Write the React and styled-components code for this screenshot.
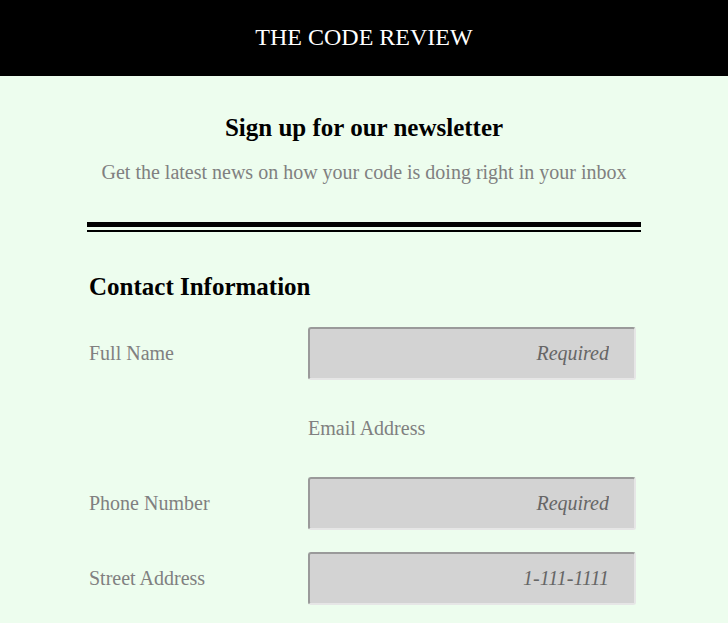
import React from 'react';
import styled, { createGlobalStyle } from 'styled-components';

const GlobalStyle = createGlobalStyle`
  html, body {
    margin: 0;
    padding: 0;
    background: #edfdee;
    font-family: "Liberation Serif", "Times New Roman", serif;
  }
`;

const Header = styled.header`
  display: flex;
  align-items: center;
  justify-content: center;
  height: 76px;
  padding-bottom: 1px;
  box-sizing: border-box;
  background: #000;
  color: #fff;
  font-size: 24px;
`;

const Main = styled.main`
  width: 554px;
  margin: 0 auto;
  display: flex;
  flex-direction: column;
`;

const Intro = styled.section`
  display: flex;
  flex-direction: column;
  align-items: center;
  padding-top: 38px;
`;

const Title = styled.h2`
  margin: 0;
  font-size: 25px;
  font-weight: bold;
  color: #000;
`;

const Subtitle = styled.p`
  margin: 19px 0 0;
  font-size: 20px;
  color: #808080;
`;

const DoubleRule = styled.div`
  margin-top: 38px;
  height: 3px;
  border-top: 5px solid #000;
  border-bottom: 2px solid #000;
`;

const SectionTitle = styled.h3`
  margin: 41px 0 0 2px;
  font-size: 25px;
  font-weight: bold;
  color: #000;
`;

const FormGrid = styled.div`
  display: grid;
  grid-template-columns: 219px 328px;
  grid-auto-rows: 53px;
  row-gap: 22px;
  align-items: center;
  margin: 26px 0 0 2px;
`;

const Label = styled.label`
  font-size: 20px;
  color: #808080;
  grid-column: ${({ $col }) => $col || 1};
`;

const Input = styled.input`
  box-sizing: border-box;
  width: 328px;
  height: 53px;
  padding: 0 25px 0 10px;
  border-radius: 3px;
  border: 2px solid #e6e6e6;
  border-top-color: #9a9a9a;
  border-left-color: #9a9a9a;
  background: #d3d3d3;
  text-align: right;
  font-family: "Liberation Serif", "Times New Roman", serif;
  font-size: 20px;
  outline: none;

  &::placeholder {
    color: #666;
    font-style: italic;
  }
`;

export default function App() {
  return (
    <>
      <GlobalStyle />
      <Header>THE CODE REVIEW</Header>
      <Main>
        <Intro>
          <Title>Sign up for our newsletter</Title>
          <Subtitle>Get the latest news on how your code is doing right in your inbox</Subtitle>
        </Intro>
        <DoubleRule />
        <SectionTitle>Contact Information</SectionTitle>
        <FormGrid>
          <Label>Full Name</Label>
          <Input placeholder="Required" />
          <Label $col={2}>Email Address</Label>
          <Label>Phone Number</Label>
          <Input placeholder="Required" />
          <Label>Street Address</Label>
          <Input placeholder="1-111-1111" />
        </FormGrid>
      </Main>
    </>
  );
}
